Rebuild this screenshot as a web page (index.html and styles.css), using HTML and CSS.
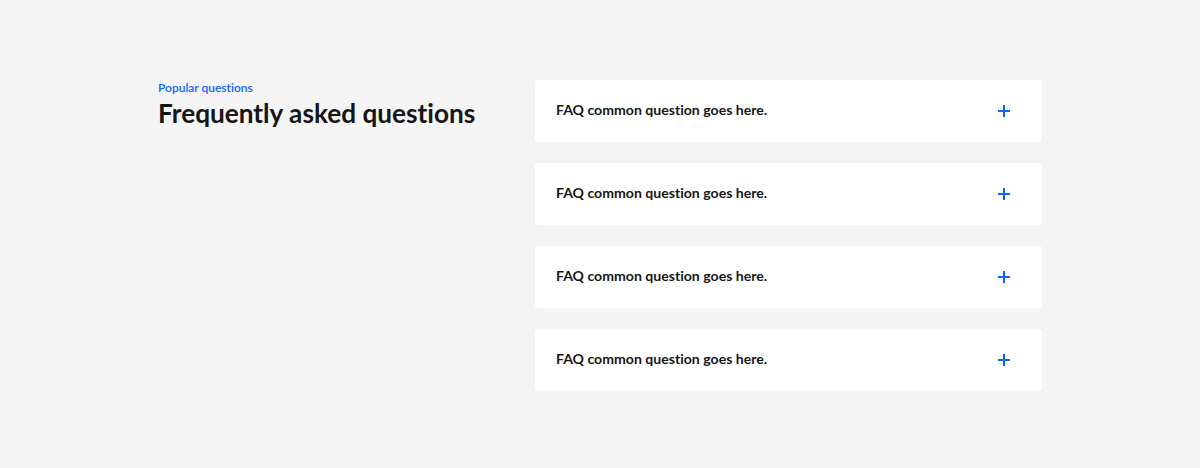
FILE: index.html
```html
<!DOCTYPE html>
<html lang="en">
<head>
<meta charset="utf-8">
<title>FAQ</title>
<link rel="stylesheet" href="styles.css">
</head>
<body>
<section class="faq">
  <div class="faq-intro">
    <p class="eyebrow">Popular questions</p>
    <h2 class="title">Frequently asked questions</h2>
  </div>
  <div class="faq-list">
    <div class="faq-item"><span class="q">FAQ common question goes here.</span><svg class="plus" viewBox="0 0 12 12" width="12" height="12"><path d="M6 0v12M0 6h12" stroke="#0f62fe" stroke-width="2"/></svg></div>
    <div class="faq-item"><span class="q">FAQ common question goes here.</span><svg class="plus" viewBox="0 0 12 12" width="12" height="12"><path d="M6 0v12M0 6h12" stroke="#0f62fe" stroke-width="2"/></svg></div>
    <div class="faq-item"><span class="q">FAQ common question goes here.</span><svg class="plus" viewBox="0 0 12 12" width="12" height="12"><path d="M6 0v12M0 6h12" stroke="#0f62fe" stroke-width="2"/></svg></div>
    <div class="faq-item"><span class="q">FAQ common question goes here.</span><svg class="plus" viewBox="0 0 12 12" width="12" height="12"><path d="M6 0v12M0 6h12" stroke="#0f62fe" stroke-width="2"/></svg></div>
  </div>
</section>
</body>
</html>
```
FILE: styles.css
```css
html, body {
  margin: 0;
  background: #f4f4f4;
  font-family: "Lato", "Noto Sans", sans-serif;
  font-variant-ligatures: none;
  color: #161616;
}
.faq {
  display: flex;
  padding: 80px 0 0 158px;
  height: 468px;
  box-sizing: border-box;
}
.faq-intro {
  width: 377px;
}
.eyebrow {
  margin: 0;
  padding-top: 1px;
  font-size: 12px;
  line-height: 14px;
  font-weight: 600;
  color: #0f62fe;
}
.title {
  margin: 2px 0 0;
  font-size: 26.2px;
  line-height: 32px;
  font-weight: 700;
}
.faq-list {
  width: 507px;
  display: flex;
  flex-direction: column;
  gap: 21px;
}
.faq-item {
  height: 62px;
  background: #fff;
  border-radius: 3px;
  display: flex;
  align-items: center;
  justify-content: space-between;
  padding: 0 32px 0 21px;
  box-sizing: border-box;
}
.q {
  font-size: 14.1px;
  font-weight: 700;
  margin-top: -4px;
}
.plus {
  display: block;
  margin-top: 0;
}
```
